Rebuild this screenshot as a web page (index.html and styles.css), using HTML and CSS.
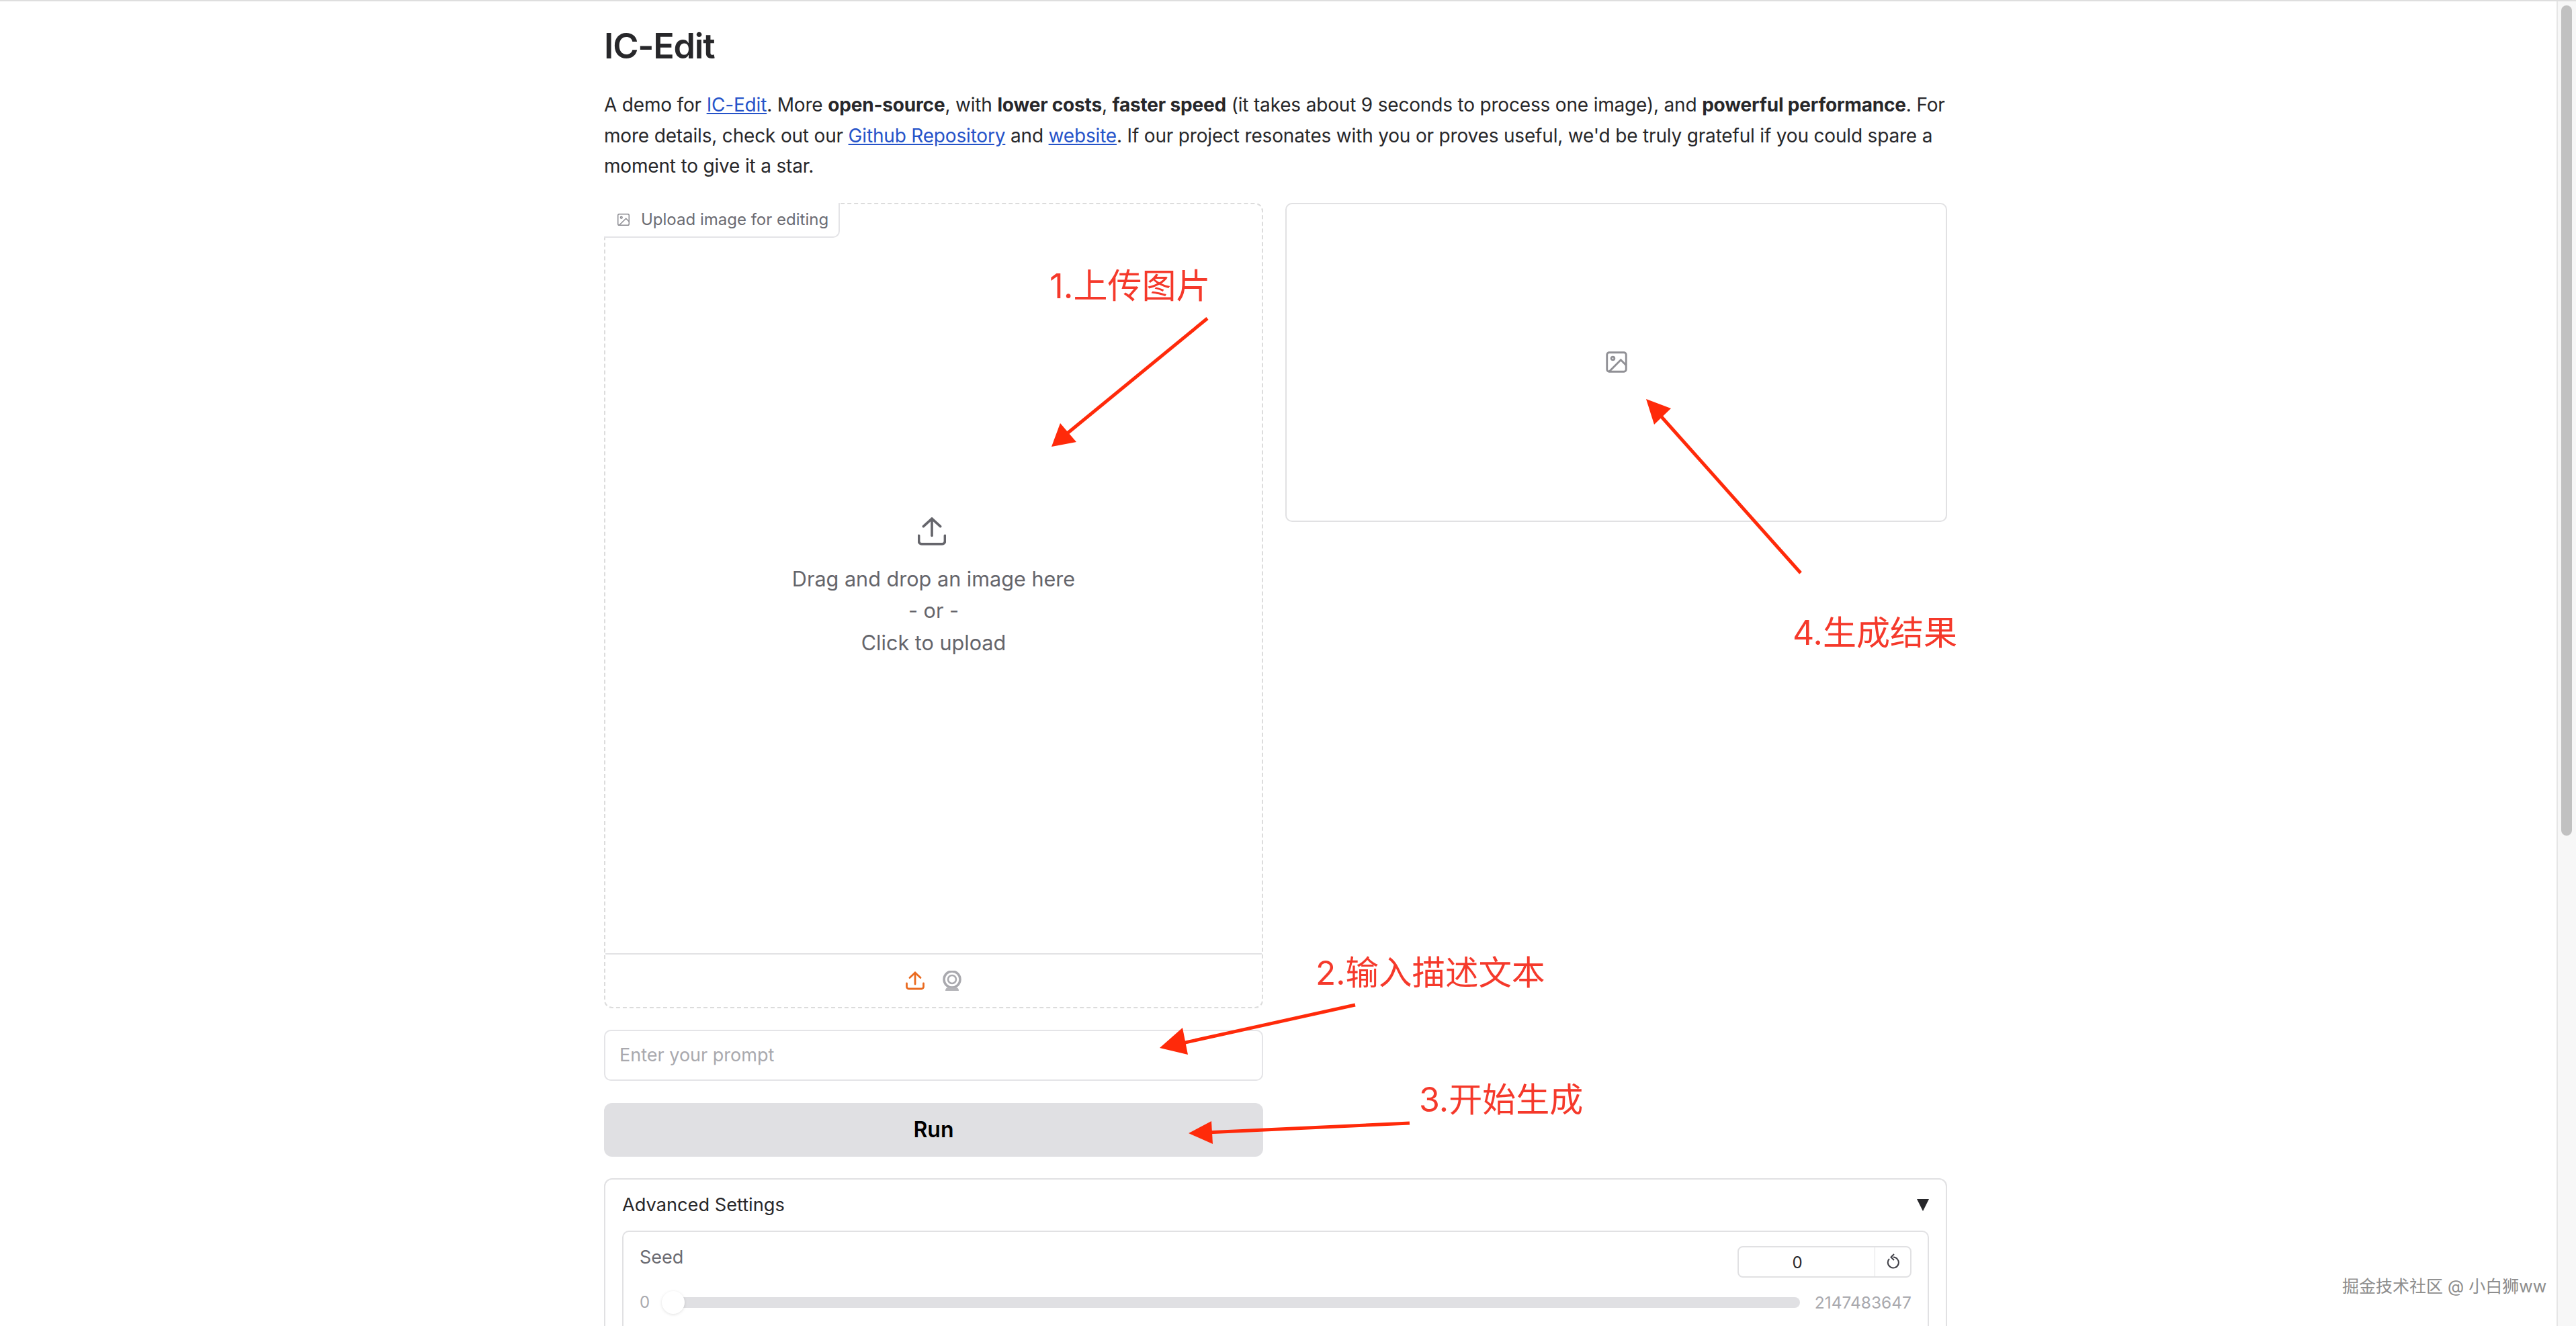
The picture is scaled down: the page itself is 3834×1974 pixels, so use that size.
FILE: index.html
```html
<!DOCTYPE html>
<html lang="en">
<head>
  <meta charset="UTF-8">
  <title>IC-Edit</title>
  <link rel="stylesheet" href="styles.css">
</head>
<body>

<div class="viewport">
  <div class="main">
    <h1>IC-Edit</h1>
    <p class="intro">A demo for <a href="#">IC-Edit</a>. More <b>open-source</b>, with <b>lower costs</b>, <b>faster speed</b> (it takes about 9 seconds to process one image), and <b>powerful performance</b>. For more details, check out our <a href="#">Github Repository</a> and <a href="#">website</a>. If our project resonates with you or proves useful, we'd be truly grateful if you could spare a moment to give it a star.</p>

    <div class="columns">
      <div class="left_col">
        <div class="dropzone">
          <div class="block_label">
            <svg class="label_icon" viewBox="0 0 24 24"><rect x="3" y="3" width="18" height="18" rx="2"/><circle cx="8.5" cy="8.5" r="1.5"/><polyline points="21 15 16 10 5 21"/></svg>
            <span>Upload image for editing</span>
          </div>
          <div class="drop_text">
            <svg class="upload_big" viewBox="0 0 40 40"><path d="M1.5 26v8a4 4 0 0 0 4 4h29a4 4 0 0 0 4-4v-8"/><path d="M20 26V2"/><path d="M8 13L20 2l12 11"/></svg>
            <span>Drag and drop an image here</span>
            <span>- or -</span>
            <span>Click to upload</span>
          </div>
          <div class="source_bar">
            <svg class="upload_small" viewBox="0 0 28 28"><path d="M1.5 18v5a3 3 0 0 0 3 3h19a3 3 0 0 0 3-3v-5"/><path d="M14 19V2"/><path d="M6 9.500l8-7.500 8 7.500"/></svg>
            <svg class="webcam" viewBox="0 0 28 30"><circle cx="14" cy="13" r="12" class="ring"/><circle cx="14" cy="13" r="6" class="ring_thin"/><path class="base" d="M4 30q0-5 5-5h10q5 0 5 5z"/></svg>
          </div>
        </div>
        <input class="prompt" type="text" placeholder="Enter your prompt">
        <button class="run_btn">Run</button>
      </div>

      <div class="output_box">
        <svg class="output_icon" viewBox="0 0 24 24"><rect x="3" y="3" width="18" height="18" rx="2"/><circle cx="8.5" cy="8.5" r="1.5"/><polyline points="21 15 16 10 5 21"/></svg>
      </div>
    </div>

    <div class="advanced">
      <div class="adv_head">
        <span>Advanced Settings</span>
        <span class="adv_arrow"></span>
      </div>
      <div class="seed_block">
        <div class="seed_top">
          <span class="seed_label">Seed</span>
          <div class="seed_box">
            <span class="seed_value">0</span>
            <span class="seed_reset">
              <svg viewBox="0 0 20 24"><path d="M5 8a8 8 0 1 0 6-2.500"/><path d="M12 1L7.500 5.500 12 10"/></svg>
            </span>
          </div>
        </div>
        <div class="slider_row">
          <span class="range_num">0</span>
          <div class="slider_track"><span class="slider_thumb"></span></div>
          <span class="range_num range_max">2147483647</span>
        </div>
      </div>
    </div>
  </div>

  <!-- hand drawn notes on top of the page -->
  <svg class="arrows" viewBox="0 0 3805 1974">
    <line x1="1797" y1="474" x2="1585" y2="648"/><polygon points="1565,665 1578,630 1602,658"/>
    <line x1="2680" y1="853" x2="2468" y2="615"/><polygon points="2450,594 2487,608 2462,632"/>
    <line x1="2017" y1="1496" x2="1755" y2="1554"/><polygon points="1726,1560 1760,1530 1768,1570"/>
    <line x1="2098" y1="1672" x2="1795" y2="1686"/><polygon points="1769,1687 1803,1669 1805,1703"/>
  </svg>
  <div class="note note_1">1.上传图片</div>
  <div class="note note_2">2.输入描述文本</div>
  <div class="note note_3">3.开始生成</div>
  <div class="note note_4">4.生成结果</div>
  <div class="watermark">掘金技术社区 @ 小白狮ww</div>
</div>

<div class="scrollbar"><div class="scroll_thumb"></div></div>

</body>
</html>
```

FILE: styles.css
```css
*{
  padding: 0;
  margin: 0;
  box-sizing: border-box;
  font-family: 'Inter', 'Noto Sans CJK SC', sans-serif;
}
html, body{
  height: 100%;
  overflow: hidden;
}
body{
  display: flex;
  background: #fff;
  border-top: 2px solid #dedede;
}
.viewport{
  flex: 1;
  position: relative;
  overflow: hidden;
}
.main{
  width: 1999px;
  margin-left: 899px;
  color: #27272a;
}

h1{
  font-size: 52px;
  line-height: 62px;
  font-weight: 600;
  margin-top: 36px;
  letter-spacing: -1.200px;
}

.intro{
  font-size: 28px;
  line-height: 45.500px;
  letter-spacing: -0.180px;
  margin-top: 34px;
}
.intro a{
  color: #2553c9;
}
.intro b{
  font-weight: 700;
}

.columns{
  display: grid;
  grid-template-columns: 981px 985px;
  column-gap: 33px;
  align-items: start;
  margin-top: 31px;
}
.left_col{
  display: flex;
  flex-direction: column;
}

/* upload box */
.dropzone{
  position: relative;
  height: 1199px;
  border: 2px dashed #dcdcdc;
  border-radius: 12px;
  display: flex;
  flex-direction: column;
}
.block_label{
  position: absolute;
  top: -2px;
  left: -2px;
  width: 351px;
  height: 52px;
  display: flex;
  align-items: center;
  gap: 15px;
  padding-left: 18px;
  border: 2px solid #e4e4e7;
  border-top: none;
  border-left: none;
  border-radius: 0 0 10px 0;
  background: #fff;
  font-size: 24px;
  color: #6b6b72;
}
.label_icon{
  width: 22px;
  height: 22px;
  fill: none;
  stroke: #8a8a90;
  stroke-width: 1.600;
}
.drop_text{
  flex: 1;
  display: flex;
  flex-direction: column;
  align-items: center;
  justify-content: center;
  font-size: 30.600px;
  line-height: 47.500px;
  color: #65656b;
  padding-top: 28px;
}
.upload_big{
  width: 42px;
  height: 42px;
  margin-bottom: 26px;
  margin-right: 5px;
  fill: none;
  stroke: #65656b;
  stroke-width: 3.500;
  stroke-linecap: round;
  stroke-linejoin: round;
}
.source_bar{
  height: 80px;
  border-top: 2px solid #e2e2e4;
  display: flex;
  align-items: center;
  justify-content: center;
  gap: 25px;
}
.upload_small{
  width: 28px;
  height: 28px;
  margin-right: 2px;
  fill: none;
  stroke: #ea6a1f;
  stroke-width: 2.800;
  stroke-linecap: round;
  stroke-linejoin: round;
}
.webcam{
  width: 28px;
  height: 30px;
  fill: none;
}
.webcam .ring{
  stroke: #a9a9ae;
  stroke-width: 3.500;
}
.webcam .ring_thin{
  stroke: #a9a9ae;
  stroke-width: 2.500;
}
.webcam .base{
  fill: #b4b4b8;
}

.prompt{
  height: 76px;
  margin-top: 32px;
  padding: 0 21px;
  border: 2px solid #e4e4e7;
  border-radius: 10px;
  font-size: 27px;
  outline: none;
}
.prompt::placeholder{
  color: #a9a9ae;
}

.run_btn{
  height: 80px;
  margin-top: 33px;
  border: none;
  border-radius: 12px;
  background: #e0e0e3;
  color: #000;
  font-size: 32px;
  font-weight: 600;
}

.output_box{
  height: 475px;
  border: 2px solid #e1e1e3;
  border-radius: 10px;
  display: flex;
  align-items: center;
  justify-content: center;
}
.output_icon{
  width: 38px;
  height: 38px;
  fill: none;
  stroke: #909095;
  stroke-width: 1.800;
}

/* advanced settings */
.advanced{
  margin-top: 32px;
  padding: 0 25px 40px 25px;
  border: 2px solid #e1e1e3;
  border-radius: 12px;
}
.adv_head{
  height: 76px;
  display: flex;
  align-items: center;
  justify-content: space-between;
  font-size: 27.200px;
  color: #27272a;
}
.adv_arrow{
  width: 0;
  height: 0;
  border-left: 9px solid transparent;
  border-right: 9px solid transparent;
  border-top: 18px solid #27272a;
}
.seed_block{
  padding: 21px 24px 60px 24px;
  border: 2px solid #e1e1e3;
  border-radius: 10px;
}
.seed_top{
  display: flex;
  justify-content: space-between;
}
.seed_label{
  font-size: 27px;
  line-height: 34px;
  color: #6b6b72;
}
.seed_box{
  width: 259px;
  height: 47px;
  display: flex;
  border: 2px solid #e1e1e3;
  border-radius: 8px;
}
.seed_value{
  flex: 1;
  padding-right: 28px;
  text-align: center;
  font-size: 24px;
  line-height: 46px;
  color: #27272a;
}
.seed_reset{
  width: 53px;
  border-left: 1px solid #e1e1e3;
  display: flex;
  align-items: center;
  justify-content: center;
}
.seed_reset svg{
  width: 20px;
  height: 24px;
  fill: none;
  stroke: #3f3f46;
  stroke-width: 2;
}
.slider_row{
  display: flex;
  align-items: center;
  gap: 22px;
  margin-top: 22px;
}
.range_num{
  font-size: 24px;
  line-height: 30px;
  color: #a9a9ae;
}
.range_max{
  font-size: 24.500px;
}
.slider_track{
  flex: 1;
  position: relative;
  height: 16px;
  border-radius: 8px;
  background: #e0e0e3;
}
.slider_thumb{
  position: absolute;
  left: -4px;
  top: -9px;
  width: 34px;
  height: 34px;
  border-radius: 50%;
  background: #fff;
  box-shadow: 0 1px 4px rgba(0,0,0,0.12);
}

/* notes */
.arrows{
  position: absolute;
  left: 0;
  top: -2px;
  width: 3805px;
  height: 1974px;
}
.arrows line{
  stroke: #ff2a0a;
  stroke-width: 5;
}
.arrows polygon{
  fill: #ff2a0a;
}
.note{
  position: absolute;
  font-size: 50px;
  line-height: 60px;
  color: #f5392b;
  white-space: nowrap;
}
.note_1{ left: 1562px; top: 394px; font-size: 51px; }
.note_2{ left: 1958px; top: 1416px; font-size: 49.500px; }
.note_3{ left: 2112px; top: 1605px; }
.note_4{ left: 2668px; top: 910px; }

.watermark{
  position: absolute;
  left: 3486px;
  top: 1898px;
  font-size: 25px;
  line-height: 30px;
  color: #8d8d8d;
  text-shadow: 1px 1px 0 #fff;
  white-space: nowrap;
}

.scrollbar{
  width: 29px;
  padding: 6px 6px 0 5px;
  background: #f7f7f7;
  border-left: 2px solid #e6e6e6;
}
.scroll_thumb{
  width: 16px;
  height: 1236px;
  border-radius: 8px;
  background: #c1c1c1;
}
```
